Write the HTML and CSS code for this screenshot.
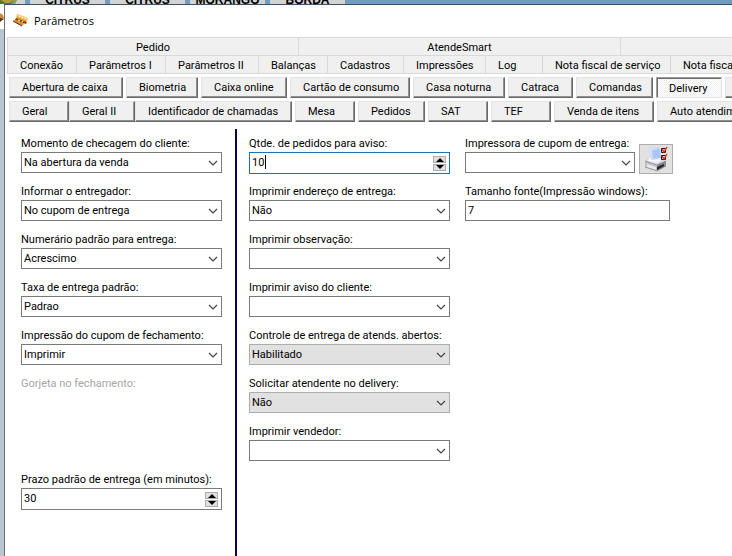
FILE: index.html
```html
<!DOCTYPE html>
<html lang="pt-BR">
<head>
  <meta charset="UTF-8" />
  <meta name="viewport" content="width=device-width, initial-scale=1.0"/>
  <title>Parâmetros</title>
  <link rel="stylesheet" href="styles.css">
</head>
<body>

  <!-- Main screen behind the window -->
  <div class="backdrop">
    <svg class="backdrop-fruit" viewBox="0 0 25 4"><rect width="18" height="4" fill="#4e7a35"/><path d="M1 0h12l-3 3H5z" fill="#b99c3c"/><path d="M13 0h4l-2 4h-4z" fill="#86a64c"/><path d="M17 0h8v4H15z" fill="#d3d3d3"/></svg>
    <span>CITRUS</span>
    <span>CITRUS</span>
    <span>MORANGO</span>
    <span>BORDA</span>
  </div>

  <div class="desk">
    <div class="desk-edge">
      <svg class="edge-icon" viewBox="0 0 4 25"><rect width="4" height="25" fill="#fff"/><path d="M0 9l3 2 1 3-4 4z" fill="#c98a45"/><path d="M0 14l4 1-3 2-1 1z" fill="#5b3517"/></svg>
    </div>

    <div class="window">
      <div class="title-bar">
        <svg class="app-icon" viewBox="0 0 16 16">
          <path d="M4 2l11 4-2 4-4 4L0 9l3-2z" fill="#f0a63c"/>
          <path d="M4 2l11 4-1 2L4 4z" fill="#f8cf7b"/>
          <path d="M3 6l11 4-1 2L2 8z" fill="#8a4a1c"/>
          <path d="M1 8l9 4-1 2-8-4z" fill="#e28a35"/>
          <path d="M6 4l1 1M9 5l1 1M12 6l1 1M5 8l2 1M9 9l1 1" stroke="#fff3c8" stroke-width="1.2"/>
          <path d="M0 9l9 5" stroke="#5b3517"/>
        </svg>
        <span>Parâmetros</span>
      </div>

      <div class="groups">
        <button>Pedido</button>
        <button>AtendeSmart</button>
        <button></button>
      </div>
      <div class="tabs">
        <button>Conexão</button>
        <button>Parâmetros I</button>
        <button>Parâmetros II</button>
        <button>Balanças</button>
        <button>Cadastros</button>
        <button>Impressões</button>
        <button>Log</button>
        <button>Nota fiscal de serviço</button>
        <button>Nota fiscal</button>
      </div>

      <div class="sub-tabs first">
        <button>Abertura de caixa</button>
        <button>Biometria</button>
        <button>Caixa online</button>
        <button>Cartão de consumo</button>
        <button>Casa noturna</button>
        <button>Catraca</button>
        <button>Comandas</button>
        <button class="active">Delivery</button>
        <button></button>
      </div>
      <div class="sub-tabs second">
        <button>Geral</button>
        <button>Geral II</button>
        <button class="spaced">Identificador de chamadas</button>
        <button class="spaced">Mesa</button>
        <button class="spaced">Pedidos</button>
        <button class="spaced">SAT</button>
        <button class="spaced">TEF</button>
        <button class="spaced">Venda de itens</button>
        <button>Auto atendimento</button>
      </div>

      <form class="panel">
        <div class="column left">
          <div class="field">
            <label for="momento">Momento de checagem do cliente:</label>
            <select id="momento"><option>Na abertura da venda</option></select>
          </div>
          <div class="field">
            <label for="informar">Informar o entregador:</label>
            <select id="informar"><option>No cupom de entrega</option></select>
          </div>
          <div class="field">
            <label for="numerario">Numerário padrão para entrega:</label>
            <select id="numerario"><option>Acrescimo</option></select>
          </div>
          <div class="field">
            <label for="taxa">Taxa de entrega padrão:</label>
            <select id="taxa"><option>Padrao</option></select>
          </div>
          <div class="field">
            <label for="impressao">Impressão do cupom de fechamento:</label>
            <select id="impressao"><option>Imprimir</option></select>
          </div>
          <div class="field tall">
            <span class="muted">Gorjeta no fechamento:</span>
          </div>
          <div class="field">
            <label for="prazo">Prazo padrão de entrega (em minutos):</label>
            <div class="spin">
              <input id="prazo" type="text" value="30">
              <div class="spin-buttons">
                <button type="button" aria-label="Aumentar"><svg viewBox="0 0 11 5"><path d="M2 5l4-4 4 4z"/></svg></button>
                <button type="button" aria-label="Diminuir"><svg viewBox="0 0 11 5"><path d="M2 0h8l-4 4z"/></svg></button>
              </div>
            </div>
          </div>
        </div>

        <div class="column middle">
          <div class="field">
            <label for="qtde">Qtde. de pedidos para aviso:</label>
            <div class="spin focused">
              <input id="qtde" type="text" value="10">
              <span class="caret"></span>
              <div class="spin-buttons">
                <button type="button" aria-label="Aumentar"><svg viewBox="0 0 11 5"><path d="M2 5l4-4 4 4z"/></svg></button>
                <button type="button" aria-label="Diminuir"><svg viewBox="0 0 11 5"><path d="M2 0h8l-4 4z"/></svg></button>
              </div>
            </div>
          </div>
          <div class="field">
            <label for="endereco">Imprimir endereço de entrega:</label>
            <select id="endereco"><option>Não</option></select>
          </div>
          <div class="field">
            <label for="observacao">Imprimir observação:</label>
            <select id="observacao"><option></option></select>
          </div>
          <div class="field">
            <label for="aviso">Imprimir aviso do cliente:</label>
            <select id="aviso"><option></option></select>
          </div>
          <div class="field">
            <label for="controle">Controle de entrega de atends. abertos:</label>
            <select id="controle" class="flat"><option>Habilitado</option></select>
          </div>
          <div class="field">
            <label for="atendente">Solicitar atendente no delivery:</label>
            <select id="atendente" class="flat"><option>Não</option></select>
          </div>
          <div class="field">
            <label for="vendedor">Imprimir vendedor:</label>
            <select id="vendedor"><option></option></select>
          </div>
        </div>

        <div class="column right">
          <div class="printer-row">
            <div class="field">
              <label for="impressora">Impressora de cupom de entrega:</label>
              <select id="impressora"><option></option></select>
            </div>
            <button type="button" class="printer" aria-label="Configurar impressora">
              <svg viewBox="0 0 24 26">
                <path d="M5 2l9-1 2 3 1 8-10 1z" fill="#a9c6fb"/>
                <path d="M5 2l8-1 1 2-6 1 1 8-2 1z" fill="#d3e2ff"/>
                <path d="M2 13l5-3h2v3l8-1 5 3-8 5-12-3z" fill="#d9dadd"/>
                <path d="M5 12l2-1v3l9-1 2 1-5 3-9-2z" fill="#f4f4f6"/>
                <path d="M1 15l12 4v6L1 21z" fill="#c0c1c6"/>
                <path d="M13 19l9-4v5l-9 5z" fill="#8b8c92"/>
                <path d="M3 18l9 3v3l-9-3z" fill="#e9e9ec"/>
                <path d="M13 21l7-3v2l-7 4z" fill="#222"/>
                <path d="M1 15l12 4 9-4M1 21l12 4 9-5" fill="none" stroke="#707178" stroke-width=".6"/>
                <g fill="none" stroke="#111">
                  <path d="M17.500 2.500h4v4h-4zM17.500 9.500h4v4h-4z"/>
                  <path d="M18 3l2 3 3-5M18 10l2 3 3-5" stroke="#dd3511" stroke-width="1.400"/>
                </g>
              </svg>
            </button>
          </div>
          <div class="field">
            <label for="fonte">Tamanho fonte(Impressão windows):</label>
            <input id="fonte" type="text" value="7">
          </div>
        </div>
      </form>
    </div>
  </div>

</body>
</html>
```

FILE: styles.css
```css
:root {
  --face: #f0f0f0;
  --line: #d9d9d9;
  --shadow: #696969;
  --field-border: #7a7a7a;
  --navy: #0a0055;
}

* {
  box-sizing: border-box;
}

body {
  margin: 0;
  min-height: 100vh;
  display: flex;
  flex-direction: column;
  overflow: hidden;
  background: white;
  color: black;
  font-family: Roboto, Tahoma, sans-serif;
  font-size: 11px;
}

button, input, select {
  font: inherit;
  color: inherit;
  margin: 0;
  padding: 0;
  border-radius: 0;
}

/* Strip of the main screen */
.backdrop {
  display: flex;
  gap: 5px;
  height: 4px;
  overflow: hidden;
  background: #6f9cc0;
}

.backdrop-fruit {
  width: 25px;
  height: 4px;
  flex: none;
}

.backdrop span {
  display: flex;
  align-items: flex-end;
  justify-content: center;
  width: 75px;
  height: 7px;
  background: #d3d3d3;
  font: bold 12px/14px 'Liberation Sans', sans-serif;
}

.desk {
  flex: 1;
  display: flex;
}

.desk-edge {
  width: 4px;
  background: #b9c5d1;
}

.edge-icon {
  display: block;
  width: 4px;
  height: 25px;
}

.window {
  flex: 1;
  min-width: 0;
  display: flex;
  flex-direction: column;
  border-top: 1px solid #3d5266;
  border-left: 1px solid #6b7075;
  background: white;
  overflow: hidden;
}

.title-bar {
  display: flex;
  align-items: center;
  gap: 5px;
  height: 32px;
  padding: 0 8px 2px;
  font-family: 'Open Sans', sans-serif;
}

.app-icon {
  width: 16px;
  height: 16px;
}

/* Page headers */
.groups, .tabs {
  display: grid;
  margin-left: 2px;
  border-left: 1px solid var(--line);
}

.groups {
  grid-template-columns: 291px 322px 322px;
  border-top: 1px solid var(--line);
}

.tabs {
  grid-template-columns: 69px 89px 93px 69px 76px 82px 57px 128px 128px;
  margin-bottom: 3px;
}

.groups button, .tabs button {
  height: 18px;
  padding-top: 2px;
  border: solid var(--line);
  border-width: 0 1px 1px 0;
  background: var(--face);
  white-space: nowrap;
}

.tabs button {
  padding-left: 12px;
  text-align: left;
}

.sub-tabs {
  display: grid;
  margin: 0 0 3px 4px;
}

.first {
  grid-template-columns: 114px 72px 86px 120px 92px 65px 77px 66px 66px;
  gap: 3px;
}

.second {
  grid-template-columns: 60px 66px 160px 63px 70px 63px 63px 103px 120px;
}

.sub-tabs button {
  height: 21px;
  padding-left: 12px;
  border: 1px solid #e3e3e3;
  border-right-color: var(--shadow);
  border-bottom-color: var(--shadow);
  box-shadow: inset -1px -1px #909090;
  background: var(--face);
  text-align: left;
  white-space: nowrap;
}

.sub-tabs .spaced {
  margin-right: 3px;
}

.sub-tabs .active {
  padding-top: 2px;
  border: 1px solid #e3e3e3;
  border-top-color: #a0a0a0;
  border-left-color: #a0a0a0;
  box-shadow: inset 1px 1px var(--shadow);
  background: repeating-conic-gradient(#f0f0f0 0 25%, white 0 50%) 0 0 / 2px 2px;
}

/* Form */
.panel {
  flex: 1;
  display: flex;
  margin-top: 4px;
}

.column {
  padding-top: 6px;
}

.left {
  width: 232px;
  padding-left: 16px;
  padding-right: 13px;
  border-right: 2px solid var(--navy);
}

.middle {
  width: 213px;
  margin-left: 12px;
  padding-right: 12px;
}

.right {
  width: 211px;
  margin-left: 3px;
}

.right > .field {
  width: 205px;
}

.field {
  display: flex;
  flex-direction: column;
  height: 48px;
}

.field.tall {
  height: 96px;
}

.field label, .muted {
  height: 17px;
  line-height: 18px;
  white-space: nowrap;
}

.muted {
  color: #a6a6a6;
}

.field select, .field > input, .spin {
  width: 100%;
  height: 21px;
  border: 1px solid var(--field-border);
  background: white;
}

.field select {
  appearance: none;
  padding: 0 20px 0 2px;
  background: white url("data:image/svg+xml,%3Csvg xmlns='http://www.w3.org/2000/svg' width='10' height='6'%3E%3Cpath d='M1 1l4 4 4-4' fill='none' stroke='%23444' stroke-width='1.2'/%3E%3C/svg%3E") no-repeat right 3px center;
}

.field select.flat {
  border-color: #adadad;
  background-color: #e1e1e1;
}

.field > input {
  padding-left: 2px;
}

.field .spin {
  position: relative;
  display: flex;
  align-items: center;
  height: 22px;
  padding: 0 3px 0 2px;
}

.spin.focused {
  border-color: #1a73b8;
}

.spin input {
  flex: 1;
  align-self: flex-start;
  min-width: 0;
  height: 18px;
  border: none;
  outline: none;
  background: none;
}

.caret {
  position: absolute;
  left: 15px;
  top: 2px;
  width: 1px;
  height: 14px;
  background: black;
}

.spin-buttons {
  display: grid;
  gap: 1px;
}

.spin-buttons button {
  display: flex;
  width: 13px;
  height: 7px;
  border: 1px solid #adadad;
  background: #e1e1e1;
}

.spin-buttons svg {
  width: 11px;
  height: 5px;
}

.printer-row {
  display: flex;
  gap: 4px;
}

.printer-row .field {
  width: 170px;
}

.printer {
  display: grid;
  place-items: center;
  width: 34px;
  height: 30px;
  margin-top: 9px;
  border: 1px solid #adadad;
  background: #e1e1e1;
}

.printer svg {
  width: 24px;
  height: 26px;
}
```
